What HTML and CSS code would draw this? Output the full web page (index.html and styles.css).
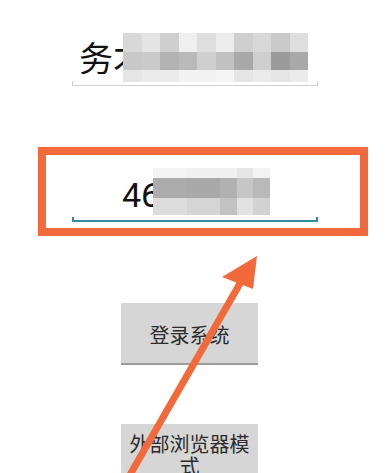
FILE: index.html
```html
<!DOCTYPE html>
<html lang="zh">
<head>
<meta charset="utf-8">
<title>登录</title>
<link rel="stylesheet" href="styles.css">
</head>
<body>
<main class="screen">
  <div class="field field-name">
    <div class="field-text name-text">务才</div>
    <div class="mosaic mosaic-name">
      <i class="c1"></i><i class="c2"></i><i class="c3"></i><i class="c4"></i><i class="c5"></i><i class="c6"></i><i class="c3"></i><i class="c1"></i><i class="c7"></i><i class="c5"></i>
      <i class="d1"></i><i class="d2"></i><i class="d3"></i><i class="d4"></i><i class="d5"></i><i class="d6"></i><i class="d7"></i><i class="d5"></i><i class="d8"></i><i class="d7"></i>
      <i class="e1"></i><i class="e2"></i><i class="e2"></i><i class="e3"></i><i class="e3"></i><i class="e4"></i><i class="e1"></i><i class="e2"></i><i class="e1"></i><i class="e2"></i>
    </div>
    <div class="underline underline-plain"></div>
  </div>

  <div class="highlight">
    <div class="field field-code">
      <div class="field-text code-text">46</div>
      <div class="mosaic mosaic-code">
        <i class="t1"></i><i class="t2"></i><i class="t2"></i><i class="t3"></i><i class="t1"></i>
        <i class="m1"></i><i class="m2"></i><i class="m3"></i><i class="m4"></i><i class="m5"></i>
        <i class="b1"></i><i class="b2"></i><i class="b3"></i><i class="b4"></i><i class="b5"></i>
      </div>
      <div class="underline underline-focus"></div>
    </div>
  </div>

  <button class="btn btn-login" type="button">登录系统</button>
  <button class="btn btn-browser" type="button">外部浏览器模式</button>

  <svg class="annotation-arrow" width="387" height="473" viewBox="0 0 387 473" aria-hidden="true">
    <line x1="127" y1="480" x2="242" y2="280" stroke="#f26a3b" stroke-width="7"/>
    <polygon points="257,256 222,277 253,289" fill="#f26a3b"/>
  </svg>
</main>
</body>
</html>
```

FILE: styles.css
```css
html, body {
  margin: 0;
  padding: 0;
  background: #ffffff;
}

.screen {
  position: relative;
  width: 387px;
  height: 473px;
  overflow: hidden;
  display: flex;
  flex-direction: column;
  align-items: flex-start;
  font-family: "Noto Sans CJK SC", "Noto Sans", sans-serif;
}

.screen > * {
  flex-shrink: 0;
}

.field {
  position: relative;
  width: 246px;
}

.field-name {
  margin-left: 72px;
  padding-top: 37px;
}

.field-text {
  height: 40px;
  line-height: 40px;
  color: #111111;
  white-space: nowrap;
}

.name-text {
  font-size: 34px;
  padding-left: 7px;
}

.code-text {
  font-family: Roboto, "Noto Sans", sans-serif;
  font-size: 34px;
  padding-left: 50px;
}

.underline {
  box-sizing: border-box;
  height: 5px;
}

.underline-plain {
  margin-top: 4px;
  border: 1px solid #cfcfcf;
  border-top: none;
}

.underline-focus {
  margin-top: 2px;
  border: 2px solid #2f8da3;
  border-top: none;
}

.mosaic {
  position: absolute;
  display: grid;
  filter: blur(0.7px);
}

.mosaic i {
  display: block;
}

.mosaic-name {
  left: 51px;
  top: 33px;
  width: 185px;
  height: 49px;
  grid-template-columns: repeat(10, 1fr);
  grid-template-rows: 19px 18px 12px;
}

.mosaic-name .c1 { background: #d8d8d8; }
.mosaic-name .c2 { background: #e4e4e4; }
.mosaic-name .c3 { background: #cfcfcf; }
.mosaic-name .c4 { background: #efefef; }
.mosaic-name .c5 { background: #dedede; }
.mosaic-name .c6 { background: #ececec; }
.mosaic-name .c7 { background: #c9c9c9; }
.mosaic-name .d1 { background: #c8c8c8; }
.mosaic-name .d2 { background: #cacaca; }
.mosaic-name .d3 { background: #b2b2b2; }
.mosaic-name .d4 { background: #b9b9b9; }
.mosaic-name .d5 { background: #cfcfcf; }
.mosaic-name .d6 { background: #c1c1c1; }
.mosaic-name .d7 { background: #a9a9a9; }
.mosaic-name .d8 { background: #9b9b9b; }
.mosaic-name .e1 { background: #e5e5e5; }
.mosaic-name .e2 { background: #ebebeb; }
.mosaic-name .e3 { background: #f2f2f2; }
.mosaic-name .e4 { background: #f5f5f5; }

.mosaic-code {
  left: 81px;
  top: 13px;
  width: 117px;
  height: 47px;
  grid-template-columns: 34px 33px 17px 16px 17px;
  grid-template-rows: 10px 20px 17px;
}

.mosaic-code .t1 { background: #f3f3f3; }
.mosaic-code .t2 { background: #f0f0f0; }
.mosaic-code .t3 { background: #e6e6e6; }
.mosaic-code .m1 { background: #acacac; }
.mosaic-code .m2 { background: #a9a9a9; }
.mosaic-code .m3 { background: #b1b1b1; }
.mosaic-code .m4 { background: #c6c6c6; }
.mosaic-code .m5 { background: #b9b9b9; }
.mosaic-code .b1 { background: #dcdcdc; }
.mosaic-code .b2 { background: #d5d5d5; }
.mosaic-code .b3 { background: #c2c2c2; }
.mosaic-code .b4 { background: #e1e1e1; }
.mosaic-code .b5 { background: #d2d2d2; }

.highlight {
  box-sizing: border-box;
  margin-top: 61px;
  margin-left: 38px;
  width: 330px;
  height: 89px;
  border: 8px solid #f26a3b;
}

.field-code {
  margin-left: 26px;
  padding-top: 20px;
}

.btn {
  display: block;
  box-sizing: border-box;
  margin-left: 121px;
  width: 137px;
  padding: 0 6px;
  border: none;
  border-bottom: 2px solid #9c9c9c;
  background: #d6d6d6;
  color: #2b2b2b;
  font-family: "Noto Sans CJK SC", "Noto Sans", sans-serif;
  font-size: 20px;
  line-height: 24px;
  text-align: center;
}

.btn-login {
  margin-top: 67px;
  height: 62px;
  padding-top: 4px;
}

.btn-browser {
  margin-top: 59px;
  height: 64px;
  padding-top: 9px;
  line-height: 22px;
  display: flex;
  align-items: flex-start;
  justify-content: center;
}

.annotation-arrow {
  position: absolute;
  left: 0;
  top: 0;
  pointer-events: none;
}
```
